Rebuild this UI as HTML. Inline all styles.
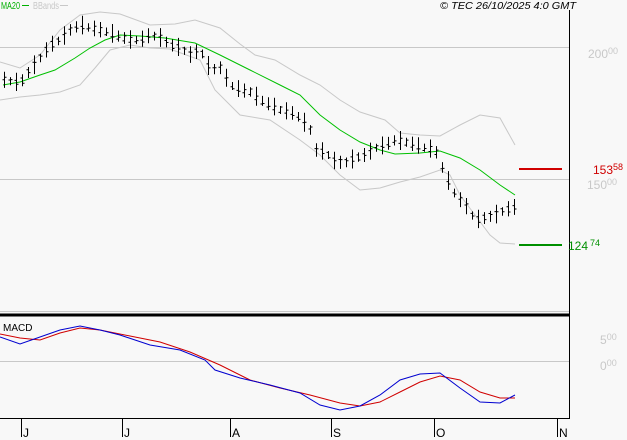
<!DOCTYPE html>
<html><head><meta charset="utf-8"><style>
body{margin:0;background:#f8f8f8;}
svg{display:block;font-family:"Liberation Sans",sans-serif;}
</style></head><body>
<svg id="s" width="627" height="440" viewBox="0 0 627 440" xmlns="http://www.w3.org/2000/svg">
<rect width="627" height="440" fill="#f8f8f8"/>
<line x1="0" y1="47.5" x2="569" y2="47.5" stroke="#c8c8c8"/>
<line x1="0" y1="179.5" x2="569" y2="179.5" stroke="#c8c8c8"/>
<line x1="0" y1="361.5" x2="569" y2="361.5" stroke="#c8c8c8"/>
<line x1="0" y1="311.5" x2="569" y2="311.5" stroke="#c8c8c8"/>
<line x1="0" y1="315" x2="569" y2="315" stroke="#000" stroke-width="3"/>
<line x1="569.5" y1="10" x2="569.5" y2="419" stroke="#000"/>
<line x1="0" y1="418.5" x2="570" y2="418.5" stroke="#000"/>
<g stroke="#000"><line x1="21.5" y1="418" x2="21.5" y2="437"/><line x1="122.5" y1="418" x2="122.5" y2="437"/><line x1="230.5" y1="418" x2="230.5" y2="437"/><line x1="331.5" y1="418" x2="331.5" y2="437"/><line x1="434.5" y1="418" x2="434.5" y2="437"/><line x1="557.5" y1="418" x2="557.5" y2="437"/></g>
<g font-size="12" fill="#000"><text x="23" y="437">J</text><text x="124" y="437">J</text><text x="232" y="437">A</text><text x="333" y="437">S</text><text x="436" y="437">O</text><text x="559" y="437">N</text></g>
<text x="1" y="9" font-size="10" fill="#00b000" textLength="19" lengthAdjust="spacingAndGlyphs">MA20</text><line x1="22" y1="5.5" x2="29" y2="5.5" stroke="#00b000"/>
<text x="33" y="9" font-size="10" fill="#c8c8c8" textLength="26" lengthAdjust="spacingAndGlyphs">BBands</text><line x1="60" y1="5.5" x2="68" y2="5.5" stroke="#c8c8c8"/>
<text x="440" y="9" font-size="10" font-style="italic" fill="#000" textLength="136" lengthAdjust="spacingAndGlyphs">© TEC 26/10/2025 4:0 GMT</text>
<text x="3" y="331" font-size="10" fill="#000">MACD</text>
<g font-size="12" fill="#c8c8c8"><text x="588" y="58">200<tspan font-size="9" dy="-4">00</tspan></text><text x="587" y="189">150<tspan font-size="9" dy="-4">00</tspan></text><text x="600" y="344">5<tspan font-size="9" dy="-4">00</tspan></text><text x="600" y="370">0<tspan font-size="9" dy="-4">00</tspan></text></g>
<line x1="519" y1="169" x2="562" y2="169" stroke="#d00000" stroke-width="2"/>
<text x="593" y="174" font-size="12" fill="#d00000">153<tspan font-size="9" dy="-4">58</tspan></text>
<line x1="519" y1="245" x2="562" y2="245" stroke="#009000" stroke-width="2"/>
<text x="568" y="250" font-size="12" fill="#009000">124<tspan font-size="9" dx="2" dy="-4">74</tspan></text>
<polyline fill="none" stroke="#c8c8c8" points="0,62 20,68 40,55 60,30 80,15 100,12 120,14 150,25 175,24 195,20 220,28 240,44 255,55 275,60 300,75 320,85 340,100 360,112 385,120 400,133 420,135 440,136 460,125 480,115 500,118 515,145"/>
<polyline fill="none" stroke="#c8c8c8" points="0,100 20,97 40,95 60,92 80,85 95,68 110,50 130,45 150,48 170,49 200,60 215,90 240,115 270,120 300,140 320,155 340,175 360,190 380,188 400,182 420,177 440,170 450,175 460,195 475,215 490,235 500,243 515,244"/>
<polyline fill="none" stroke="#00c000" points="3,85 20,82 40,75 55,70 75,58 90,48 105,40 120,35 140,36 165,38 195,43 220,55 250,70 280,85 300,95 320,115 340,130 360,142 380,150 395,154 420,153 440,151 460,158 480,170 500,185 515,195"/>
<polyline fill="none" stroke="#d00000" points="0,334 20,338 40,340 60,333 80,328 100,330 130,336 160,342 190,352 220,365 250,380 280,388 310,395 340,403 360,406 380,402 400,392 420,382 440,376 460,380 480,392 500,398 515,398"/>
<polyline fill="none" stroke="#0000d0" points="0,337 20,344 40,337 60,330 80,326 100,330 120,335 150,345 180,350 205,360 215,370 240,378 270,385 300,393 320,405 340,410 360,406 380,395 400,380 420,374 440,373 460,388 480,402 500,403 515,395"/>
<path id="bars" stroke="#000" fill="none" d=""/>
</svg>
<script>
var pts=[[3,80],[20,83],[30,70],[40,58],[50,45],[60,40],[70,30],[80,25],[90,28],[100,30],[110,33],[120,37],[130,40],[140,40],[150,35],[160,38],[170,45],[180,48],[190,55],[200,50],[210,70],[220,68],[230,85],[240,90],[250,92],[260,100],[270,105],[280,110],[290,112],[300,118],[310,130],[315,150],[325,152],[335,162],[345,163],[355,158],[365,155],[375,148],[385,145],[395,140],[405,142],[415,145],[425,148],[435,150],[445,175],[455,195],[465,205],[475,220],[485,218],[495,215],[505,210],[515,207]];
function py(x){for(var i=0;i<pts.length-1;i++){if(x<=pts[i+1][0]){var a=pts[i],b=pts[i+1];return a[1]+(b[1]-a[1])*(x-a[0])/(b[0]-a[0]);}}return pts[pts.length-1][1];}
var d='';
for(var x=4;x<=515;x+=6){var xx=Math.round(x)+0.5,c=py(x),r=(Math.sin(x*1.7)+1)*0.5;
var t=(c-4-r*6).toFixed(1),b=(c+4+r*5).toFixed(1),o=(c+Math.sin(x*3.1)*3).toFixed(1),cl=(c+Math.cos(x*2.3)*3).toFixed(1);
d+='M'+xx+' '+t+'V'+b+'M'+(xx-2)+' '+o+'H'+xx+'M'+xx+' '+cl+'H'+(xx+2);}
document.getElementById('bars').setAttribute('d',d);
</script>
</body></html>
